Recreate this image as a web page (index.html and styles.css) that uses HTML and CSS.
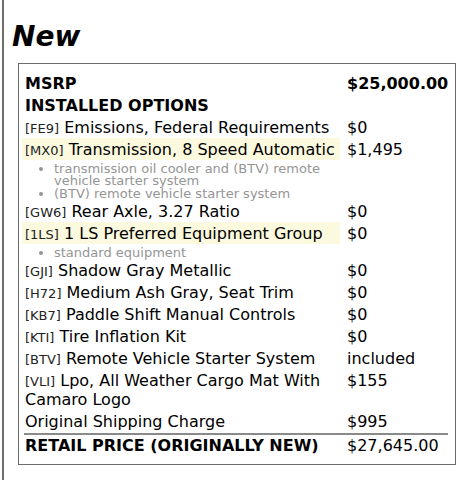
FILE: index.html
```html
<!DOCTYPE html>
<html lang="en">
<head>
<meta charset="utf-8">
<title>Window Sticker – New</title>
<link rel="stylesheet" href="styles.css">
</head>
<body>
<div class="panel">
  <h2 class="title">New</h2>
  <div class="sheet">
    <div class="row bold"><div class="desc">MSRP</div><div class="price">$25,000.00</div></div>
    <div class="row bold"><div class="desc span">INSTALLED OPTIONS</div></div>
    <div class="row"><div class="desc"><span class="code">[FE9]</span> Emissions, Federal Requirements</div><div class="price">$0</div></div>
    <div class="row"><div class="desc hl"><span class="code">[MX0]</span> Transmission, 8 Speed Automatic</div><div class="price">$1,495</div></div>
    <div class="row">
      <ul class="notes">
        <li>transmission oil cooler and (BTV) remote vehicle starter system</li>
        <li>(BTV) remote vehicle starter system</li>
      </ul>
    </div>
    <div class="row"><div class="desc"><span class="code">[GW6]</span> Rear Axle, 3.27 Ratio</div><div class="price">$0</div></div>
    <div class="row"><div class="desc hl"><span class="code">[1LS]</span> 1 LS Preferred Equipment Group</div><div class="price">$0</div></div>
    <div class="row">
      <ul class="notes">
        <li>standard equipment</li>
      </ul>
    </div>
    <div class="row"><div class="desc"><span class="code">[GJI]</span> Shadow Gray Metallic</div><div class="price">$0</div></div>
    <div class="row"><div class="desc"><span class="code">[H72]</span> Medium Ash Gray, Seat Trim</div><div class="price">$0</div></div>
    <div class="row"><div class="desc"><span class="code">[KB7]</span> Paddle Shift Manual Controls</div><div class="price">$0</div></div>
    <div class="row"><div class="desc"><span class="code">[KTI]</span> Tire Inflation Kit</div><div class="price">$0</div></div>
    <div class="row"><div class="desc"><span class="code">[BTV]</span> Remote Vehicle Starter System</div><div class="price">included</div></div>
    <div class="row"><div class="desc"><span class="code">[VLI]</span> Lpo, All Weather Cargo Mat With Camaro Logo</div><div class="price">$155</div></div>
    <div class="row"><div class="desc">Original Shipping Charge</div><div class="price">$995</div></div>
    <div class="sep"></div>
    <div class="row"><div class="desc bold">RETAIL PRICE (ORIGINALLY NEW)</div><div class="price">$27,645.00</div></div>
  </div>
</div>
</body>
</html>
```

FILE: styles.css
```css
html, body {
  margin: 0;
  padding: 0;
  background: #fff;
}

body {
  font-family: "DejaVu Sans", "Liberation Sans", sans-serif;
  color: #000;
  height: 480px;
  overflow: hidden;
}

.panel {
  margin-left: 2px;
  border-left: 2px solid #6f6f6f;
  min-height: 480px;
  padding-top: 21px;
}

.title {
  margin: 0;
  padding-left: 8px;
  font-size: 28px;
  font-weight: bold;
  font-style: italic;
  line-height: 32px;
  color: #000;
}

.sheet {
  margin-top: 10px;
  margin-left: 14px;
  width: 438px;
  box-sizing: border-box;
  border: 1px solid #6a6a6a;
  padding: 8px 3px 7px 3px;
  font-size: 16px;
}

.row {
  display: grid;
  grid-template-columns: 318px 1fr;
  column-gap: 4px;
}

.desc,
.price {
  padding: 1.5px 3px;
  line-height: 19px;
}

.desc.span {
  grid-column: 1 / -1;
}

.hl {
  background: #fbf9de;
}

.bold {
  font-weight: bold;
}

.code {
  font-size: 13px;
  line-height: 1;
  color: #222;
}

.notes {
  margin: 0;
  padding: 3px 0 1px 32px;
  font-size: 13px;
  line-height: 11.5px;
  color: #959595;
}

.notes li + li {
  margin-top: 1.5px;
}

.sep {
  height: 2px;
  background: #8a8a8a;
  margin: 0 4px 0 2px;
}
```
